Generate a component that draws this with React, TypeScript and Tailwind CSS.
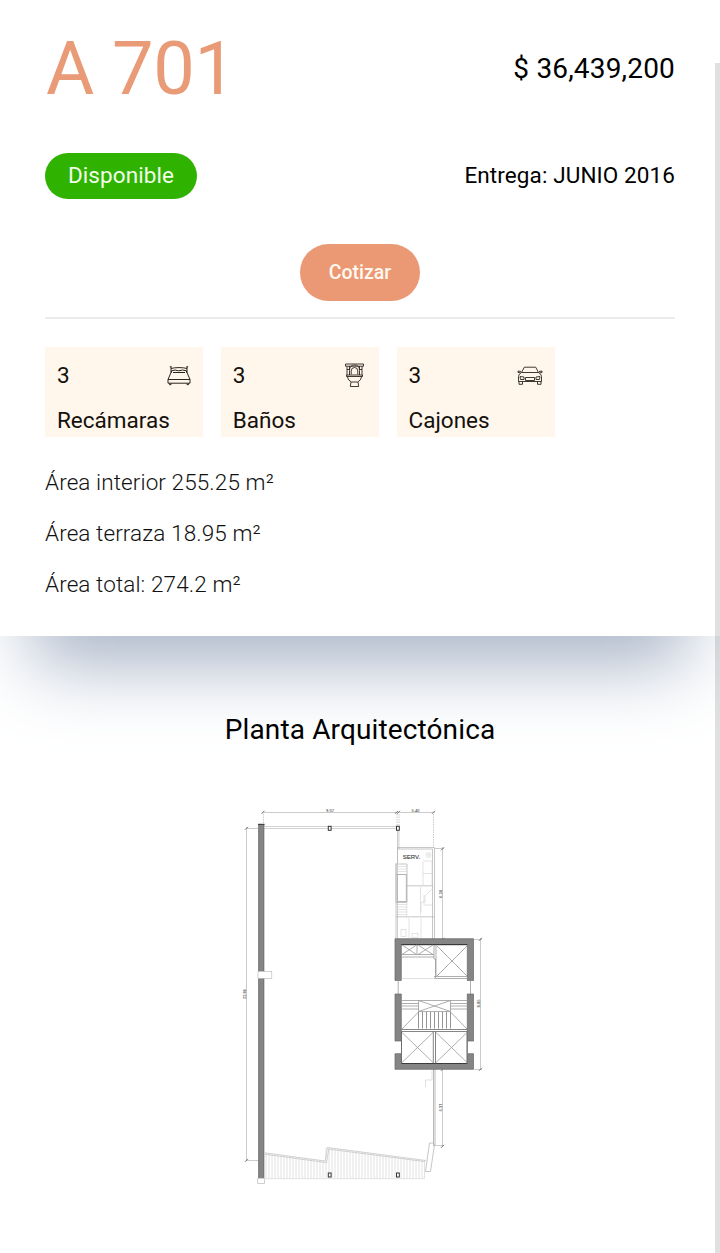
import type { ReactNode } from 'react';

interface Feature {
  count: number;
  label: string;
  icon: ReactNode;
}

const BedIcon = () => (
  <svg width="24" height="22" viewBox="0 0 24 22" fill="none" stroke="#2b241f" strokeWidth="1">
    <path d="M4 8V1.5M20 8V1.5M4 3.5C8 2.3 16 2.3 20 3.5M2.8 1.8h1.7M19.500 1.800h1.700" />
    <path d="M4.500 7.500V5.800q3.500-1.500 7.200 0q4-1.500 7.800 0v1.700M6 7.500h12" />
    <path d="M4 7.500L1 14.500v3.700h22v-3.700L20 7.500M1 14.500h22" />
    <path d="M2.500 18.500v1.200h1.500v-1.200M20 18.500v1.200h1.500v-1.200" />
  </svg>
);

const ToiletIcon = () => (
  <svg className="mr-[3px]" width="19" height="25" viewBox="0 0 19 25" fill="none" stroke="#2b241f" strokeWidth="0.9">
    <path d="M.5 1h18v2.200H.5zM2 3.200v9M17 3.200v9M2 6.500h3M14 6.500h3M4.500 3.200v3.300M14.500 3.200v3.300" />
    <path d="M4.500 12V7.500q0-5.500 5-5.500t5 5.500V12M6.200 11.500V8q0-3.500 3.300-3.500T12.800 8v3.500" />
    <path d="M1.500 12h16v1.500h-16zM2.300 13.500q.7 4 4 5.500h6.400q3.300-1.500 4-5.500" />
    <path d="M6 19L5.300 23.500h8.400L13 19" />
  </svg>
);

const CarIcon = () => (
  <svg width="26" height="20" viewBox="0 0 26 20" fill="none" stroke="#2b241f" strokeWidth="0.9">
    <path d="M4.500 6.500L7.300 1.200h11.400l2.800 5.300zM4 5.500L1 5v1.500l2.500.3M22 5.500l3-.5v1.500l-2.500.3" />
    <path d="M4.500 6.500q-3 1.500-3 4v5h23v-5q0-2.500-3-4" />
    <path d="M3 10.500l4 .5v2.500H3.500zM23 10.500l-4 .5v2.500h3.500zM8.500 11.500h9v3h-9z" />
    <path d="M2 15.500v2.800h3.500v-2.800M20.500 15.500v2.800H24v-2.800" />
  </svg>
);

const features: Feature[] = [
  { count: 3, label: 'Recámaras', icon: <BedIcon /> },
  { count: 3, label: 'Baños', icon: <ToiletIcon /> },
  { count: 3, label: 'Cajones', icon: <CarIcon /> },
];

const areas = ['Área interior 255.25 m²', 'Área terraza 18.95 m²', 'Área total: 274.2 m²'];

// Small ticks where the dimension lines end
const ticks = [
  [263, 812], [396.500, 812], [398.500, 812], [433.500, 812], [246.500, 828], [246.500, 1160],
  [442.500, 848.500], [442.500, 939], [480.500, 939], [480.500, 1069], [442.500, 1069], [442.500, 1146],
];

const columns = [[328.300, 826.300], [396.500, 826.300], [328.300, 1173], [396.500, 1173]];

// Terrace floor boards
const boards = Array.from({ length: 53 }, (_, i) => 266 + i * 3);
const boardTop = (x: number) => (x < 326 ? 1153 + (x - 265) * 0.13 : 1147.500 + (x - 328) * 0.135);

const FloorPlan = () => (
  <svg width="270" height="390" viewBox="230 800 270 390" fill="none" className="block">
    {/* dimension lines */}
    <g stroke="#b4b4b4" strokeWidth="0.7">
      <path d="M262 812.500H435M246.500 827V1161M442.500 847V939M480.500 938V1070M442.500 1069V1147" />
      <path d="M247 828.500h11M247 1160.500h12M435 848.500h9M474 939.500h8M474 1069.500h8M434 1145.500h10" />
      <path d="M263.500 814v9M397 814v12M399 814v12M433.500 814v33" strokeDasharray="1.500 1" />
    </g>
    <g stroke="#666" strokeWidth="0.9">
      {ticks.map(([x, y]) => (
        <path key={`${x}-${y}`} d={`M${x - 1.500} ${y + 1.800}l3-3`} />
      ))}
    </g>
    <g fill="#666" stroke="#666" strokeWidth="0.1" fontSize="4" fontFamily="Roboto, sans-serif" textAnchor="middle">
      <text x="330" y="811.500">9.07</text>
      <text x="415.500" y="811.500">5.40</text>
      <text transform="translate(245.500 994) rotate(-90)">22.86</text>
      <text transform="translate(441.500 894) rotate(-90)">6.24</text>
      <text transform="translate(480 1003.500) rotate(-90)">8.85</text>
      <text transform="translate(441.500 1107.500) rotate(-90)">5.31</text>
    </g>

    {/* main facade */}
    <path d="M264 826.500H397M264 828.500H397" stroke="#c8c8c8" strokeWidth="0.8" />
    <path d="M397.500 831v118M398.900 831v18" stroke="#b9b9b9" strokeWidth="0.7" />
    <rect x="258.300" y="824" width="5.900" height="354" fill="#858585" />
    <path d="M258.600 824V1178M263.800 824V1178" stroke="#666" strokeWidth="0.6" />
    <path d="M258 824.300h6.500" stroke="#333" />
    <rect x="258" y="971.300" width="13.800" height="7" fill="#fff" stroke="#b5b5b5" strokeWidth="0.6" />
    <rect x="257.700" y="1178.300" width="6.800" height="5.200" fill="#fff" stroke="#bbb" strokeWidth="0.7" />

    {/* terrace */}
    <g stroke="#dadada" strokeWidth="0.8">
      {boards.map((x) => (
        <path key={x} d={`M${x} ${boardTop(x)}V1178.500`} />
      ))}
      <path d="M264 1178.700H424.500V1160" />
    </g>
    <path d="M264.500 1152.800L325 1161l2.500-13.500L426 1160.500M265 1154.300l61.500 8.300 2.300-13.500 96 12.500" stroke="#c6c6c6" strokeWidth="0.8" />
    <path d="M429.500 1143l-4 28.500h5l4-27M429.500 1143h4" stroke="#b8b8b8" strokeWidth="0.8" />
    <path d="M433.500 1069v77M435 1069v76" stroke="#b2b2b2" strokeWidth="0.9" />
    <path d="M432 1070v10h-6.500v7" stroke="#d4d4d4" strokeWidth="0.7" />
    {columns.map(([x, y]) => (
      <rect key={`${x}-${y}`} x={x} y={y} width="2.800" height="4" fill="#fff" stroke="#333" />
    ))}

    {/* service room */}
    <g stroke="#b8b8b8" strokeWidth="0.8">
      <path d="M397 847.500h37.500v91M398 849h34.500v90M396 863v75M397.500 848v15" />
      <path d="M407 885.800h26M396 916.800h38M396 864h11v38.500h-11zM396 874.500h11" />
    </g>
    <g stroke="#d0d0d0" strokeWidth="0.6">
      <path d="M396 866.500h11M396 869h11M396 871.500h11M396 904.500h11M396 907h11M396 909.500h11M396 912h11M396 914.500h11" />
      <path d="M406.800 874V916M420.500 887v28M423 861h9v24M423 862v23M423 873.500h9M421 912v-10h4v-6l7-7M424 895v10h8M409 918v20M421 918v20" />
      <rect x="401" y="929.500" width="5" height="7" />
      <rect x="412" y="933.500" width="6" height="4" />
      <circle cx="428.500" cy="855" r="2.500" />
      <circle cx="428.500" cy="855" r="1" />
    </g>
    <rect x="397.300" y="874.500" width="9" height="27" stroke="#b0b0b0" strokeWidth="0.9" />
    <text x="411.500" y="859" fill="#444" stroke="#444" strokeWidth="0.15" fontSize="6" fontFamily="Liberation Sans, sans-serif" textAnchor="middle">SERV.</text>

    {/* elevator and stair core */}
    <path d="M395 938.700H473.500V980.500H467.300V944.900H401.300V980.500H395zM395 994H401.300V1041H395zM467.300 994H473.500V1041H467.300zM395 1053.700H401.300V1063.500H467.300V1053.700H473.500V1069.300H395z" fill="#858585" stroke="#666" strokeWidth="0.7" />
    <path d="M401.300 944.500h66M401.300 1063.500h66" stroke="#333" strokeWidth="0.9" />
    <g stroke="#999" strokeWidth="0.8">
      <path d="M401.500 954.500h32.500M401.500 957h32.500M417 945v9.500M434 945v14h1.500v19M436 945v31.500M434 976.500h33.500M434 978.500h33.500" />
      <path d="M402 945l14.500 9.500M416.500 945l-14.500 9.500M418 945l15 9.500M433 945l-15 9.500M437 946l30 30M467 946l-30 30" />
      <path d="M398.200 980.500V994M470.500 980.500V994" />
      <path d="M401.500 1000.500h66M401.500 1003.500h17M401.500 1006h17M401.500 1009h17M450.500 1003.500h17M450.500 1006h17M450.500 1009h17" />
      <path d="M418.500 1000.500v11M450.500 1000.500v11M418.500 1011.500h32M418.500 1000.500l32 11M450.500 1000.500l-32 11" />
      <path d="M402 1029l16.500-17M467 1029l-16.500-17" />
      <path d="M401.500 1029.500h66M401.500 1031.500h66" stroke="#666" />
      <path d="M401.500 1031.500v32M433.300 1031.500v32M435.500 1031.500v32M467 1031.500v32" stroke="#666" />
      <path d="M402 1032.500l31 30M433 1032.500l-31 30M436 1032.500l31 30M467 1032.500l-31 30" />
      <path d="M401.500 1041v12.500M467.300 1041v12.500" stroke="#666" />
    </g>
    <path d="M418.500 1012v16.500M422.500 1012v16.500M426.500 1012v16.500M430.500 1012v16.500M434.500 1012v16.500M438.500 1012v16.500M442.500 1012v16.500M446.500 1012v16.500M450.500 1012v16.500" stroke="#888" strokeWidth="0.9" />
    <path d="M401.500 978.500h32" stroke="#ccc" strokeWidth="0.6" />
  </svg>
);

export default function App() {
  return (
    <div className="relative h-[1253px] w-[720px] overflow-hidden bg-white font-['Roboto',sans-serif] text-black">
      <section className="relative h-[636px] bg-white px-[45px] shadow-[0_60px_70px_-31px_#a9b5c8]">
        <div className="flex h-[136px] items-center justify-between pt-[2px]">
          <h1 className="pl-[1px] text-[74px] leading-none tracking-[-0.300px] text-[#e99a77]">A 701</h1>
          <span className="text-[28px] leading-none tracking-[0.17px]">$ 36,439,200</span>
        </div>

        <div className="mt-[17px] flex h-[46px] items-center justify-between">
          <span className="flex h-[46px] w-[152px] items-center justify-center rounded-full bg-[#2fb200] text-[22.500px] tracking-[0.1px] text-[#f1ffe9]">
            Disponible
          </span>
          <span className="pb-[2px] text-[22.500px] leading-none tracking-[0.1px]">Entrega: JUNIO 2016</span>
        </div>

        <div className="mt-[45px] flex justify-center">
          <button className="h-[57px] w-[120px] rounded-full bg-[#eb9974] text-[19.500px] font-medium text-[#fff8f0]">
            Cotizar
          </button>
        </div>

        <div className="mt-[16px] h-[2px] bg-[#ebebeb]" />

        <div className="mt-[28px] flex gap-[17.800px]">
          {features.map((feature) => (
            <div key={feature.label} className="h-[90px] w-[158px] bg-[#fff6ec] px-[12px] text-[22.500px] text-[#14100c]">
              <div className="flex h-[56px] items-center justify-between pt-[1px]">
                <span>{feature.count}</span>
                {feature.icon}
              </div>
              <div className="leading-[34px]">{feature.label}</div>
            </div>
          ))}
        </div>

        <div className="mt-[20px] text-[22.500px] font-light leading-[51px] tracking-[0.1px] text-[#111]">
          {areas.map((area) => (
            <p key={area}>{area}</p>
          ))}
        </div>
      </section>

      <section className="relative flex flex-col items-center pt-[77px]">
        <h2 className="text-[28px] leading-[34px] tracking-[0.13px]">Planta Arquitectónica</h2>
        <div className="mt-[53px] w-[260px]">
          <FloorPlan />
        </div>
      </section>

      {/* scrollbar */}
      <div className="absolute right-0 top-[63px] bottom-0 w-[5px] bg-black/12" />
    </div>
  );
}
